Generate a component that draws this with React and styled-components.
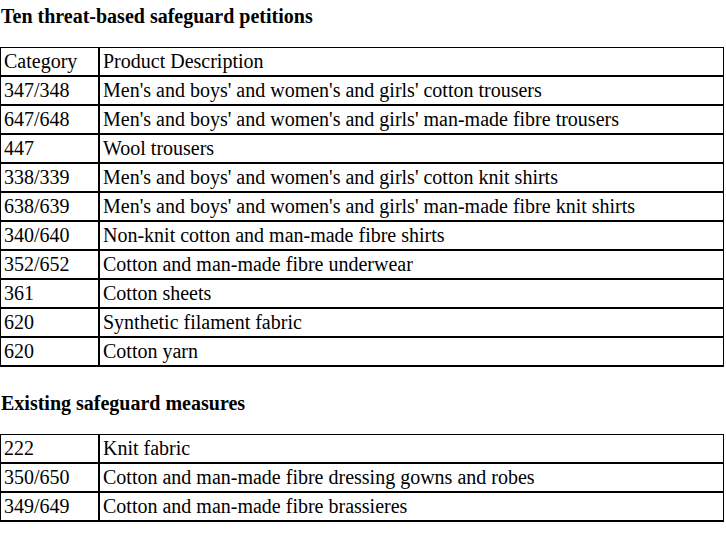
import React from "react";
import styled, { createGlobalStyle } from "styled-components";

const GlobalStyle = createGlobalStyle`
    body {
        margin: 0;
        background: #ffffff;
        font-family: "Liberation Serif", "Times New Roman", serif;
        color: #000000;
    }
`;

const Page = styled.div`
    width: 724px;
    padding-top: 5px;
`;

const Heading = styled.h3`
    margin: ${(props) => (props.first ? "0" : "25px")} 0 19px 1px;
    font-size: 20px;
    line-height: 23px;
    font-weight: bold;
`;

const Table = styled.table`
    width: 724px;
    border-collapse: separate;
    border-spacing: 0;
    border-bottom: 1px solid #000000;
    font-size: 20px;
`;

const Cell = styled.td`
    border: 1px solid #000000;
    padding: 2px 2px 2px 3px;
    line-height: 23px;
    height: 23px;
    vertical-align: middle;
    white-space: nowrap;
    width: ${(props) => (props.code ? "92px" : "auto")};
`;

const petitions = [
    ["Category", "Product Description"],
    ["347/348", "Men's and boys' and women's and girls' cotton trousers"],
    ["647/648", "Men's and boys' and women's and girls' man-made fibre trousers"],
    ["447", "Wool trousers"],
    ["338/339", "Men's and boys' and women's and girls' cotton knit shirts"],
    ["638/639", "Men's and boys' and women's and girls' man-made fibre knit shirts"],
    ["340/640", "Non-knit cotton and man-made fibre shirts"],
    ["352/652", "Cotton and man-made fibre underwear"],
    ["361", "Cotton sheets"],
    ["620", "Synthetic filament fabric"],
    ["620", "Cotton yarn"],
];

const measures = [
    ["222", "Knit fabric"],
    ["350/650", "Cotton and man-made fibre dressing gowns and robes"],
    ["349/649", "Cotton and man-made fibre brassieres"],
];

function CategoryTable({ rows }) {
    return (
        <Table>
            <tbody>
                {rows.map((row, i) => (
                    <tr key={i}>
                        <Cell code>{row[0]}</Cell>
                        <Cell>{row[1]}</Cell>
                    </tr>
                ))}
            </tbody>
        </Table>
    );
}

export default function App() {
    return (
        <Page>
            <GlobalStyle />
            <Heading first>Ten threat-based safeguard petitions</Heading>
            <CategoryTable rows={petitions} />
            <Heading>Existing safeguard measures</Heading>
            <CategoryTable rows={measures} />
        </Page>
    );
}
